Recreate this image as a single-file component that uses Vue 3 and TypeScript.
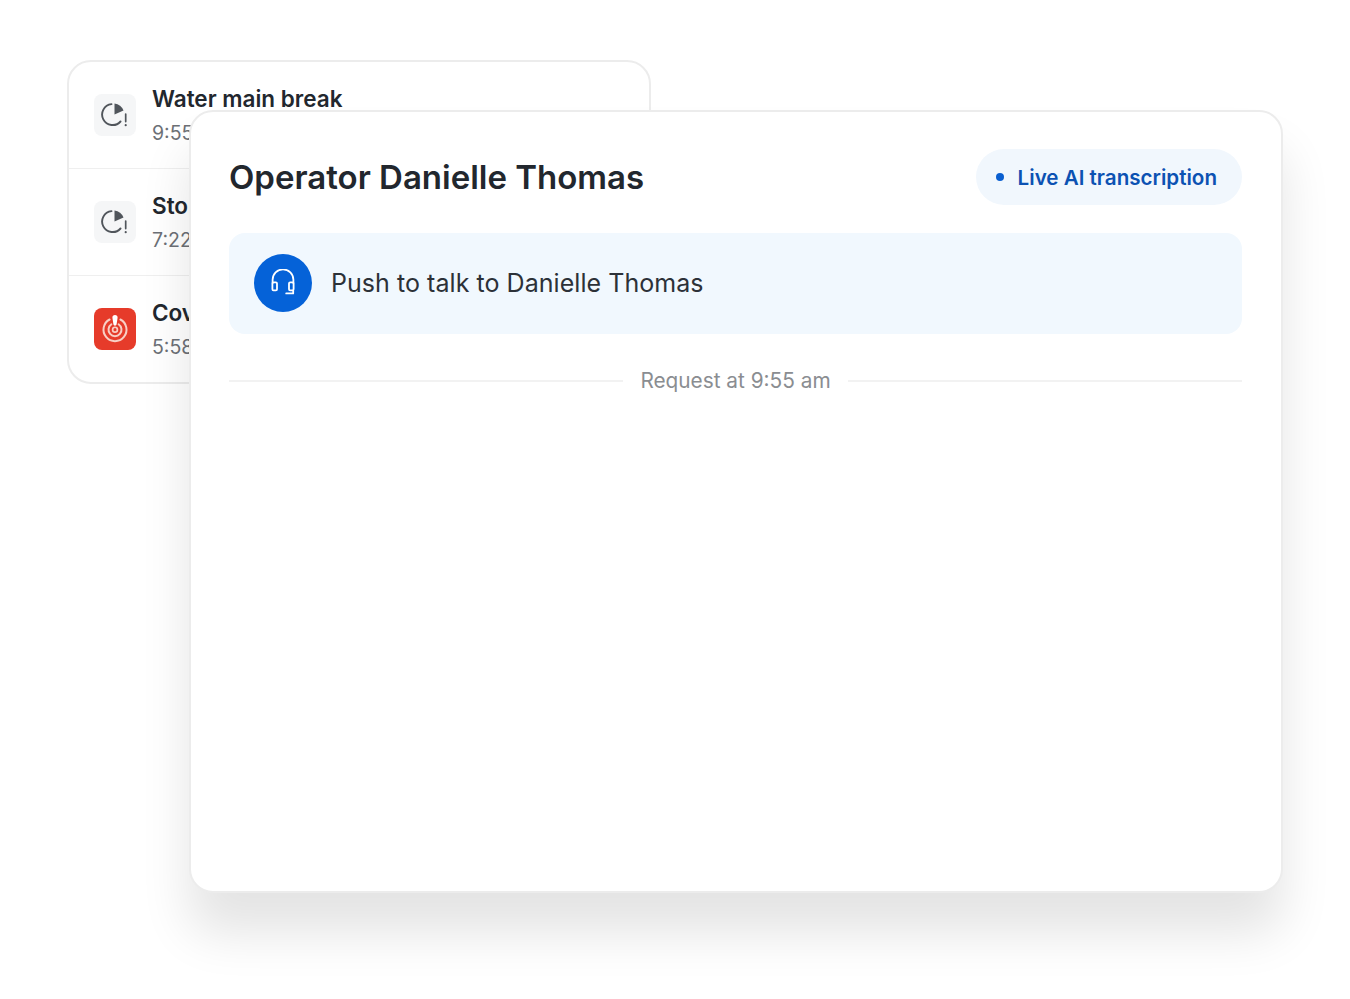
<template>
  <main class="stage">
    <!-- incidents list behind the operator card -->
    <section class="incidents">
      <div v-for="item in incidents" :key="item.title" class="incident">
        <span class="badge" :class="{ urgent: item.urgent }">
          <svg v-if="item.urgent" width="30" height="30" viewBox="0 0 30 30" fill="none">
            <path d="M9.6 5.5a11.5 11.5 0 1 0 10.8 0" stroke="#f8cfc5" stroke-width="2" stroke-linecap="round" />
            <path d="M11.4 10.25a6.5 6.5 0 1 0 7.2 0" stroke="#f8cfc5" stroke-width="2" stroke-linecap="round" />
            <circle cx="15" cy="15.65" r="2.4" stroke="#f8cfc5" stroke-width="1.7" />
            <path d="M15 1c1.6 0 2.7 1.1 2.6 2.7l-1 6.6c-.2 1.9-3 1.9-3.2 0l-1-6.6C12.3 2.1 13.4 1 15 1z" fill="#fff" />
          </svg>
          <svg v-else width="30" height="30" viewBox="0 0 30 30" fill="none">
            <path d="M11.5 4.1a10.5 10.5 0 1 0 9 17.4" stroke="#50555b" stroke-width="1.9" stroke-linecap="round" />
            <path d="M14.5 3.5a11.2 11.2 0 0 1 9 7l-9 4z" fill="#50555b" />
            <path d="M25.7 14v7.6" stroke="#50555b" stroke-width="1.7" stroke-linecap="round" />
            <circle cx="25.7" cy="25.2" r="1.1" fill="#50555b" />
          </svg>
        </span>
        <div class="incident-text">
          <div class="incident-title">{{ item.title }}</div>
          <div class="incident-time">{{ item.time }}</div>
        </div>
      </div>
    </section>

    <section class="operator">
      <header class="operator-head">
        <h1>Operator Danielle Thomas</h1>
        <span class="live"><i class="dot" />Live AI transcription</span>
      </header>

      <div class="talk">
        <span class="talk-btn">
          <svg width="28" height="28" viewBox="0 0 28 28" fill="none" stroke="#fff" stroke-width="1.8" stroke-linecap="round" stroke-linejoin="round">
            <path d="M3.6 14v-3.2a10.4 10.4 0 0 1 20.8 0v3.2" />
            <rect x="3.4" y="13.4" width="4.6" height="8" rx="1.1" />
            <rect x="20" y="13.4" width="4.6" height="8" rx="1.1" />
            <path d="M24.2 21.4v3h-7" />
          </svg>
        </span>
        <span class="talk-label">Push to talk to Danielle Thomas</span>
      </div>

      <div class="request">
        <span class="rule" />
        <span class="request-text">Request at 9:55 am</span>
        <span class="rule" />
      </div>
    </section>
  </main>
</template>

<script setup lang="ts">
interface Incident {
  title: string;
  time: string;
  urgent?: boolean;
}

const incidents: Incident[] = [
  { title: "Water main break", time: "9:55 am" },
  { title: "Stopped vehicle", time: "7:22 am" },
  { title: "Covered manhole", time: "5:58 am", urgent: true },
];
</script>

<style scoped>
.stage {
  display: grid;
  width: 1350px;
  height: 999px;
  overflow: hidden;
  background: #fff;
  font-family: Inter, "Liberation Sans", sans-serif;
  color: #22272e;
}

.incidents,
.operator {
  grid-area: 1 / 1;
  box-sizing: border-box;
  background: #fff;
}

/* back card */
.incidents {
  align-self: start;
  justify-self: start;
  width: 584px;
  height: 324px;
  margin: 60px 0 0 67px;
  border: 2px solid #ececec;
  border-radius: 24px;
}
.incident {
  display: flex;
  align-items: center;
  gap: 16px;
  box-sizing: border-box;
  height: 107px;
  padding-left: 25px;
  border-bottom: 1px solid #efefef;
}
.incident:last-child {
  border-bottom-color: transparent;
}
.badge {
  display: grid;
  place-items: center;
  flex: none;
  width: 42px;
  height: 42px;
  border-radius: 8px;
  background: #f5f6f7;
}
.badge.urgent {
  background: #e63b2a;
}
.incident-text {
  padding-top: 2px;
}
.incident-title {
  font-size: 22.5px;
  line-height: 28px;
  font-weight: 600;
  white-space: nowrap;
}
.incident-time {
  margin-top: 6px;
  font-size: 19.5px;
  line-height: 28px;
  color: #6c7076;
}

/* front card */
.operator {
  z-index: 1;
  align-self: start;
  justify-self: start;
  width: 1094px;
  height: 783px;
  margin: 110px 0 0 189px;
  padding: 37px 39px 37px 38px;
  border: 2px solid #ececec;
  border-radius: 24px;
  box-shadow: 0 40px 50px rgba(0, 0, 0, 0.11);
}
.operator-head {
  display: flex;
  align-items: center;
  justify-content: space-between;
  height: 56px;
}
h1 {
  margin: 0;
  font-size: 33px;
  font-weight: 600;
  color: #22272e;
}
.live {
  display: flex;
  align-items: center;
  gap: 14px;
  box-sizing: border-box;
  height: 56px;
  padding: 0 25px 0 20px;
  border-radius: 28px;
  background: #f1f7fd;
  font-size: 20.6px;
  font-weight: 600;
  color: #0c52b3;
}
.dot {
  width: 8px;
  height: 8px;
  border-radius: 50%;
  background: #0a5fd0;
}
.talk {
  display: flex;
  align-items: center;
  gap: 19px;
  box-sizing: border-box;
  height: 101px;
  margin-top: 28px;
  padding: 0 0 1px 25px;
  border-radius: 16px;
  background: #f1f8fe;
}
.talk-btn {
  display: grid;
  place-items: center;
  width: 58px;
  height: 58px;
  border-radius: 50%;
  background: #0562d8;
}
.talk-label {
  font-size: 25px;
  letter-spacing: 0.05px;
  color: #2c3138;
}
.request {
  display: flex;
  align-items: center;
  gap: 17px;
  margin-top: 32px;
}
.rule {
  flex: 1;
  height: 2px;
  background: #f2f2f2;
}
.request-text {
  font-size: 20.8px;
  line-height: 30px;
  color: #8a8d91;
}
</style>

<style>
html,
body {
  margin: 0;
  background: #fff;
}
</style>
